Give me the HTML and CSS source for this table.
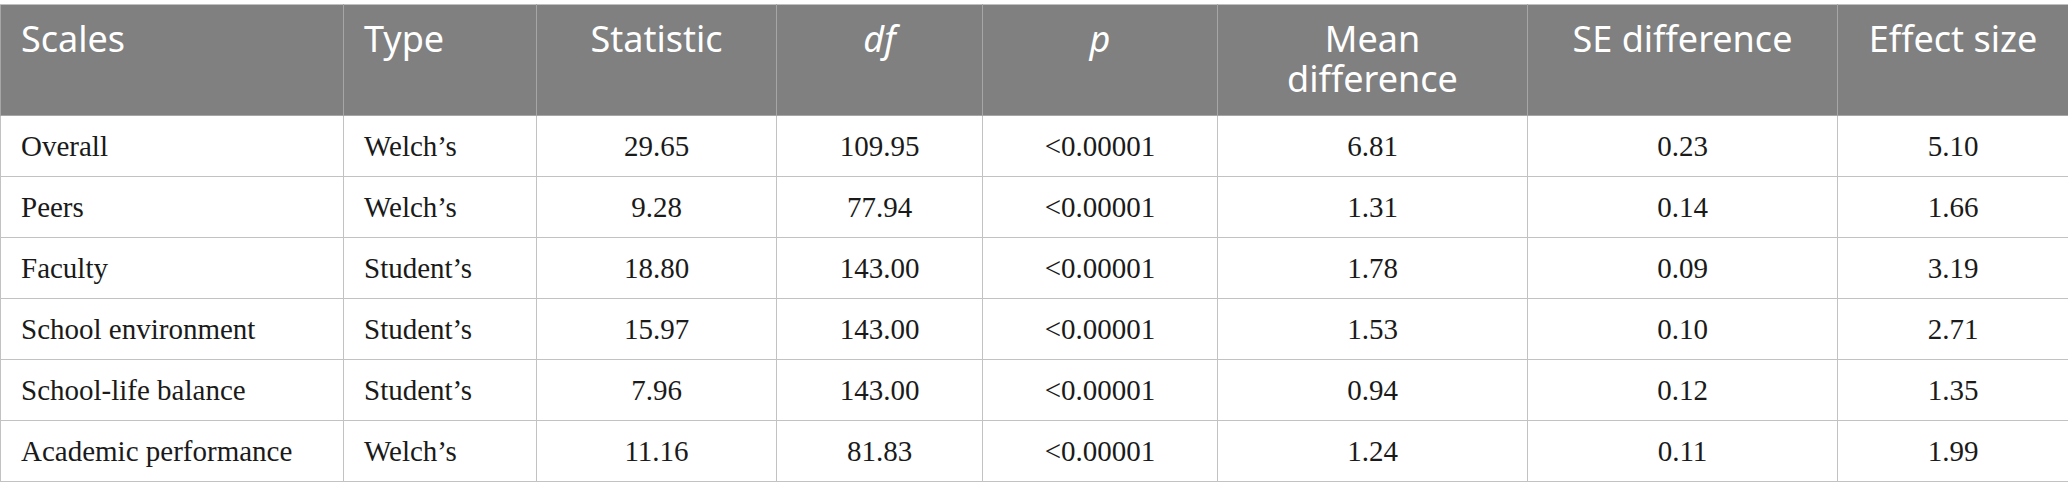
FILE: index.html
```html
<!DOCTYPE html>
<html>
<head>
<meta charset="utf-8">
<link rel="stylesheet" href="styles.css">
</head>
<body>
<table class="stats">
  <colgroup>
    <col class="c-scales">
    <col class="c-type">
    <col class="c-stat">
    <col class="c-df">
    <col class="c-p">
    <col class="c-mean">
    <col class="c-se">
    <col class="c-eff">
  </colgroup>
  <thead>
    <tr>
      <th class="left">Scales</th>
      <th class="left">Type</th>
      <th>Statistic</th>
      <th><i>df</i></th>
      <th><i>p</i></th>
      <th>Mean<br>difference</th>
      <th>SE difference</th>
      <th>Effect size</th>
    </tr>
  </thead>
  <tbody>
    <tr><td class="left">Overall</td><td class="left">Welch’s</td><td>29.65</td><td>109.95</td><td>&lt;0.00001</td><td>6.81</td><td>0.23</td><td>5.10</td></tr>
    <tr><td class="left">Peers</td><td class="left">Welch’s</td><td>9.28</td><td>77.94</td><td>&lt;0.00001</td><td>1.31</td><td>0.14</td><td>1.66</td></tr>
    <tr><td class="left">Faculty</td><td class="left">Student’s</td><td>18.80</td><td>143.00</td><td>&lt;0.00001</td><td>1.78</td><td>0.09</td><td>3.19</td></tr>
    <tr><td class="left">School environment</td><td class="left">Student’s</td><td>15.97</td><td>143.00</td><td>&lt;0.00001</td><td>1.53</td><td>0.10</td><td>2.71</td></tr>
    <tr><td class="left">School-life balance</td><td class="left">Student’s</td><td>7.96</td><td>143.00</td><td>&lt;0.00001</td><td>0.94</td><td>0.12</td><td>1.35</td></tr>
    <tr><td class="left">Academic performance</td><td class="left">Welch’s</td><td>11.16</td><td>81.83</td><td>&lt;0.00001</td><td>1.24</td><td>0.11</td><td>1.99</td></tr>
  </tbody>
</table>
</body>
</html>
```

FILE: styles.css
```css
html, body {
  margin: 0;
  padding: 0;
  background: #ffffff;
}

.stats {
  margin-top: 4px;
  width: 2068px;
  table-layout: fixed;
  border-collapse: collapse;
}

.c-scales { width: 343px; }
.c-type { width: 193px; }
.c-stat { width: 240px; }
.c-df { width: 206px; }
.c-p { width: 235px; }
.c-mean { width: 310px; }
.c-se { width: 310px; }
.c-eff { width: 231px; }

.stats th {
  background: #808080;
  color: #ffffff;
  font-family: "Noto Sans", "Open Sans", sans-serif;
  font-weight: 400;
  font-size: 36px;
  line-height: 40px;
  height: 81px;
  padding: 14px 20px 15px;
  text-align: center;
  vertical-align: top;
  border: 1px solid #a6a6a6;
  border-top-color: #c0c0c0;
}

.stats td {
  font-family: "Liberation Serif", "Times New Roman", serif;
  font-size: 29px;
  color: #1a1a1a;
  height: 60px;
  padding: 0 20px;
  text-align: center;
  vertical-align: middle;
  border: 1px solid #c2c2c2;
}

.stats .left {
  text-align: left;
}
```
